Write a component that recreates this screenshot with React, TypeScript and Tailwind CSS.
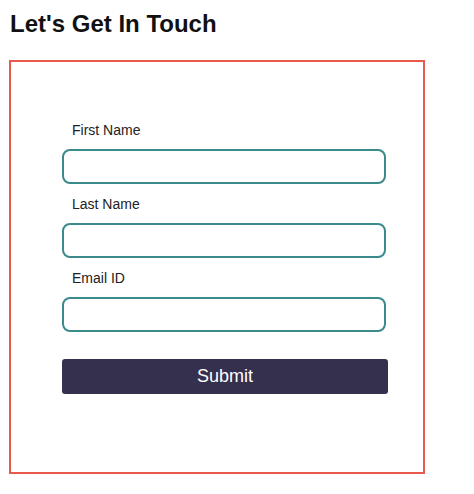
export default function App() {
  const fields = ['First Name', 'Last Name', 'Email ID'];

  return (
    <div className="min-h-screen bg-white pt-[10px] font-['Liberation_Sans',Arial,sans-serif]">
      <h1 className="ml-[10px] text-[24px] leading-[28px] font-bold text-[#111]">
        Let's Get In Touch
      </h1>

      {/* Contact form */}
      <div className="mt-[22px] ml-[9px] w-[416px] border-2 border-[#e85a4d] pt-[60px] pb-[78px] pl-[51px]">
        {fields.map((label) => (
          <div key={label} className="mb-[12px]">
            <label className="block pl-[10px] text-[14px] leading-[16px] text-[#222] mb-[11px]">
              {label}
            </label>
            <input
              type="text"
              className="block w-[324px] h-[35px] rounded-[8px] border-2 border-[#3b8a8c] bg-white px-2 outline-none"
            />
          </div>
        ))}
        <button className="mt-[27px] block w-[326px] h-[35px] rounded-[3px] bg-[#36304f] text-white text-[18px] leading-[35px]">
          Submit
        </button>
      </div>
    </div>
  );
}
